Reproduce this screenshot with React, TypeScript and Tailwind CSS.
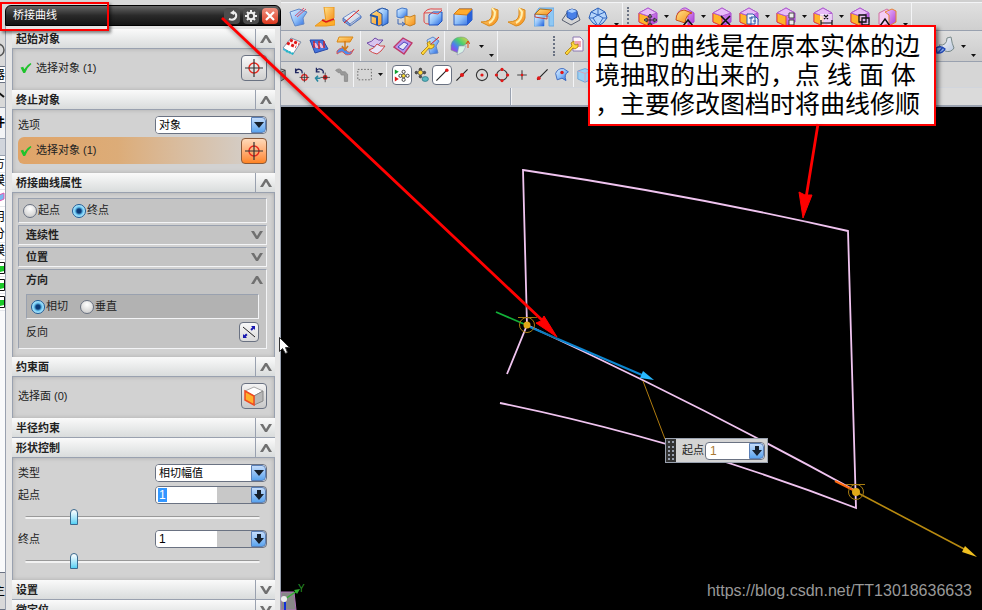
import React, { useState } from "react";

const P = "url(#gPurple)";
const B = "url(#gBlue)";
const O = "url(#gOrange)";
const W = "url(#gWhite)";
const R = "#e01818";

function Defs() {
  return (
    <svg className="absolute h-0 w-0" aria-hidden="true">
      <defs>
        <linearGradient id="gBlue" x1="0" y1="0" x2="1" y2="1">
          <stop offset="0" stopColor="#e4f1ff" />
          <stop offset=".5" stopColor="#8fc0f8" />
          <stop offset="1" stopColor="#1f5fdc" />
        </linearGradient>
        <linearGradient id="gOrange" x1="0" y1="0" x2="1" y2="1">
          <stop offset="0" stopColor="#ffe38a" />
          <stop offset="1" stopColor="#f58a14" />
        </linearGradient>
        <linearGradient id="gPurple" x1="0" y1="0" x2="1" y2="1">
          <stop offset="0" stopColor="#f3c8ff" />
          <stop offset="1" stopColor="#a83ad6" />
        </linearGradient>
        <linearGradient id="gWhite" x1="0" y1="0" x2="1" y2="1">
          <stop offset="0" stopColor="#ffffff" />
          <stop offset="1" stopColor="#b9c6dc" />
        </linearGradient>
        <linearGradient id="gRainbow" x1="0" y1="1" x2="1" y2="0">
          <stop offset="0" stopColor="#d020d8" />
          <stop offset=".35" stopColor="#4d7df0" />
          <stop offset=".6" stopColor="#48d070" />
          <stop offset="1" stopColor="#ffd040" />
        </linearGradient>
      </defs>
    </svg>
  );
}

const purpleCube = (
  <>
    <path d="M1 6 10 1l9 5v9l-9 4-9-4z" fill={P} stroke="#a848d0" />
    <path d="M1 6l9 3v10l-9-4z" fill="#ffb42c" stroke="#e8482c" />
    <path d="M1 6 10 1l9 5-9 3z" fill="#e8bcf8" stroke="#b060d0" />
  </>
);
const wrench = (
  <path d="M1 17l7-7-1-3 3-2v3l2 1 2-1v3l-3 2-2-1-6 7z" fill="#ffd83a" stroke="#a87808" strokeWidth=".8" />
);

const icons: Record<string, React.ReactNode> = {
  trimSheet: <><path d="M2 5l9-3 8 3-4 6 1 6-9 2-3-7z" fill={B} stroke="#6088c8" /><path d="M7 9 16 1M9 10l9-8" stroke="#d85070" /></>,
  sheetCorner: <><path d="M9 0h10v11l-8 4z" fill={O} stroke="#e89820" /><path d="M0 19l9-7 2 4 9-3v5l-9 1z" fill="#ffad2a" stroke="#e89820" /><path d="M7 13l4 2 8-3" stroke={R} strokeWidth="1.5" fill="none" /></>,
  split: <><path d="M1 11l11-7 7 5-11 8z" fill={W} stroke="#6f8cc8" /><path d="M1 11v3l7 5v-2zM8 19l11-8V9" fill="#7ea5e8" stroke="#5575b8" /><path d="M2 16 17 3" stroke={R} /></>,
  blocks: <><path d="M2 7l8-5h7v13l-7 4-8-3z" fill={O} stroke="#2c58b0" /><path d="M8 4l5-3 6 2v13l-6 3V7z" fill={B} stroke="#2456a8" /><path d="M1 8l7 2v8" fill="none" stroke="#2456a8" strokeWidth="2" /></>,
  copyFace: <><path d="M1 3l5-2 5 1v7l-6 2-4-1z" fill={B} stroke="#4478c8" /><path d="M9 9l5 1 5-2v9l-5 2-5-2z" fill={O} stroke="#c88020" /><path d="M2 12v5h6M6 15l3 2-3 2" fill="none" stroke="#3c66b4" /></>,
  wrap: <><path d="M6 8l4-3h9v9l-4 4H6z" fill={B} stroke="#1c50c0" /><path d="M1 6q3-5 10-4h8M1 6v8q0 3 5 3" fill="none" stroke="#e04848" /><path d="M1 6q6-1 14 1l4-4" fill="none" stroke="#e04848" /></>,
  blueBox: <><path d="M1 7l5-5h13v11l-5 5H1z" fill={B} stroke="#2c5cc0" /><path d="M1 7l5-5h13l-5 6z" fill="#ffac2c" stroke="#d87c10" /><path d="M14 8v10l5-5V3z" fill="#2861d8" /></>,
  curlA: <><path d="M12 1l6 2v8q-2 7-9 8l-8-4q10 0 11-7z" fill={O} stroke="#d98a1c" /><path d="M12 1l3 4q0 8-6 11" fill="none" stroke="#fff0b0" strokeWidth="2" /></>,
  panel: <><path d="M0 8 5 1h15v18h-5V9l-5 1v9H0z" fill="#8fc8f4" stroke="#6aa8e0" /><path d="M1 8h9v11H1z" fill={B} /><path d="M1 7l5-5 12 1-5 5z" fill={O} stroke="#b07018" /><path d="M1 7v3l12 2V8l5-5" fill="none" stroke="#c04040" /></>,
  pyramid: <><path d="M1 13l7-10h7l4 10-9 5z" fill="none" stroke="#585f70" /><path d="M6 4l5-2 5 2v6l-5 3-5-3z" fill="#4880e8" stroke="#2450a8" /><path d="M6 4l5-2 5 2-5 2z" fill="#a8ceff" /></>,
  gem: <><path d="M10 1l7 4 2 6-4 5-5 3-5-3-4-5 2-6z" fill="#b4d4fa" stroke="#2a60b8" /><path d="M3 5l7 3 7-3M1 11h4l5-3 5 3h4M10 1v7M5 11l5 8 5-8" fill="none" stroke="#3468c0" /></>,
  pMove: <>{purpleCube}<path d="M12 8v11M7 13h11M12 7l-2 3h4zM12 20l-2-3h4zM6 13l3-2v4zM19 13l-3-2v4z" stroke="#222" fill="#fff" strokeWidth=".9" /></>,
  pOffset: <><path d="M2 7q5-7 9-6l8 5v9l-6 3V9z" fill={P} stroke="#a848d0" /><path d="M1 13q0-9 8-10l8 3q-6 1-7 10z" fill={O} stroke="#c8501c" /><path d="M8 19l5-6 5 6" fill="none" stroke="#111" strokeWidth="1.5" /></>,
  pDelete: <>{purpleCube}<path d="M9 9l9 9M18 9l-9 9" stroke="#111" strokeWidth="1.6" /></>,
  pCopy: <>{purpleCube}<path d="M8 7h6l2 2v8H8zM12 10h5l2 2v7h-7z" fill="#eef4ff" stroke="#315aa8" /><path d="M10 11h4M14 14h3" stroke="#315aa8" /></>,
  pPattern: <>{purpleCube}<path d="M13 6h5v5h-5zM13 13h5v5h-5z" fill="#eee" stroke="#444" /></>,
  pDim: <>{purpleCube}<rect x="7" y="7" width="12" height="12" fill="#ffffffb0" /><path d="M8 13v6M19 13v6M8 16h11M11 8l4 4M15 8l-4 4" stroke="#111" strokeWidth="1.2" /></>,
  pBox: <>{purpleCube}<path d="M9 8h7v7H9zM12 11h7v7h-7z" fill="#fff8" stroke="#111" strokeWidth="1.3" /></>,
  pPair: <><path d="M2 6l8-4 3 2v12l-8 3-3-2z" fill="#f5cdf5" stroke="#d070a0" /><path d="M8 5l7-3 4 2v11l-7 4V8z" fill={P} stroke="#e88430" /><path d="M3 19l5-7 5 7" fill="none" stroke="#111" strokeWidth="1.4" /></>,
  grid: <><path d="M1 12l8-10 10 4-8 12z" fill="#fff" stroke="#8090a8" /><path d="M1 12l10 6v1L1 14z" fill="#42b8d8" /><path d="M5 7l9 4M8 4l9 4" stroke={R} strokeWidth="3" strokeDasharray="3 1.6" /><path d="M4 15l8 3" stroke="#20b8c8" strokeWidth="2" strokeDasharray="2 1" /></>,
  arrowsSheet: <><path d="M1 4l13 0 5 9-13 4z" fill="#4474dc" stroke="#2848a8" /><path d="M4 7h3l3 5H7zM9 7h3l3 5h-3z" fill="#f0b8d8" /><path d="M5 12V5M10 13V5M15 12V5" stroke={R} strokeWidth="1.3" /></>,
  planes: <><path d="M3 1h14l-3 5H1z" fill={O} stroke="#d88818" /><path d="M1 15q6-6 9-1t8-1l-3 5q-5 2-7-1t-7 1z" fill="#4a8cf0" stroke="#d85858" /><path d="M9 5v8M6 10l3 4 3-4" stroke="#d07818" fill="none" strokeWidth="1.5" /></>,
  ribbons: <><path d="M1 7q5-1 8-5 3 3 8 2-4 5-8 7-5-1-8-4z" fill="#d8c4f0" stroke="#7048a8" /><path d="M3 14q5-1 8-6 3 3 8 2-4 6-8 8-5-1-8-4z" fill="#e8e4f8" stroke="#d04848" /></>,
  frame: <><path d="M1 11 10 2l9 5-8 11z" fill="#b894e8" stroke="#c03868" strokeWidth="1.4" /><path d="M5 11l6-5 4 2-5 6z" fill="#e6e6f6" stroke="#4a48c0" /></>,
  fixSheet: <><path d="M7 4l6-3 6 4-3 5 2 7-8 1z" fill={B} stroke="#6088c8" /><path d="M10 9l9-8" stroke={R} />{wrench}</>,
  color: <><path d="M1 9q2-8 10-8 6 0 8 5l-6 4q-4-2-5 7l-7-3z" fill="url(#gRainbow)" stroke="#70a080" strokeWidth=".6" /><path d="M9 10h7l-3 6-6 3z" fill="#d6f3e6" stroke="#88a" strokeWidth=".5" /><path d="M18 12V6M16 8l2-3 2 3" stroke="#d84c10" fill="none" /></>,
  fixNote: <><path d="M9 1h7l3 3v11H9z" fill="#fff5fa" stroke="#8a78b0" /><path d="M11 6h6M11 8h6M11 10h6" stroke="#e05070" />{wrench}</>,
  roll: <><path d="M4 9q8 1 8-7l4-1q1 7 3 11-3 5-9 3z" fill={W} stroke="#788" /><path d="M1 12q5-3 9 1-3 5-8 4zM3 17l5-6" stroke="#2048b8" strokeWidth="1.4" fill="#88a8e8" /></>,
  cube: <path d="M1 5l6-3 7 2v10l-6 4-7-3zM8 7v11M1 5l7 2 6-3" fill="#999" stroke="#333" />,
  undoTarget: <><path d="M2 6q1-4 5-3t3 5M2 2v5h4" fill="none" stroke="#202860" strokeWidth="1.6" /><circle cx="13" cy="13" r="3.5" fill="none" stroke={R} strokeWidth="1.5" /><path d="M13 7v12M7 13h12" stroke="#333" /></>,
  redoTarget: <><path d="M3 5q2-4 6-2t2 5M3 1v5h4" fill="none" stroke="#202860" strokeWidth="1.6" /><path d="M2 14h6M5 11l-3 3 3 4" fill="none" stroke="#2888a0" strokeWidth="2" /><circle cx="14" cy="13" r="3" fill={R} /><path d="M14 7v12M8 13h12" stroke="#333" /></>,
  pipe: <path d="M2 4q6-4 8 2h4l3 3v9h-4v-8H9q0-4-4-3z" fill="#999" stroke="#888" />,
  marquee: <rect x="1" y="3" width="17" height="13" fill="none" stroke="#555" strokeDasharray="2 2" />,
  snapFlower: <><path d="M1 3l5 3-5 3z" fill="#10a030" /><path d="M1 12l5 3-5 3z" fill={R} /><g fill="#fff" stroke="#222"><circle cx="12" cy="6" r="2" /><circle cx="12" cy="16" r="2" /><circle cx="8" cy="11" r="2" /><circle cx="17" cy="11" r="2" /></g><circle cx="12" cy="11" r="2.4" fill="#ffe030" stroke="#444" /></>,
  snapGear: <><g fill="#555" stroke="#333"><circle cx="8" cy="3" r="1.6" /><circle cx="3" cy="7" r="1.6" /><circle cx="13" cy="7" r="1.6" /><circle cx="8" cy="12" r="1.6" /></g><circle cx="8" cy="7" r="3" fill="#ffd838" stroke="#555" /><ellipse cx="14" cy="15" rx="4" ry="3" fill="#58b8c0" stroke="#2c7888" /></>,
  endpoint: <><path d="M3 17 16 4" stroke="#222" strokeWidth="1.4" /><circle cx="16" cy="4" r="2.2" fill={R} /></>,
  midpoint: <><path d="M3 17 17 3" stroke="#222" strokeWidth="1.4" /><circle cx="10" cy="10" r="2.6" fill={R} /></>,
  center: <><circle cx="10" cy="10" r="7" fill="none" stroke="#333" strokeWidth="1.4" /><circle cx="10" cy="10" r="2" fill={R} /></>,
  quadrant: <><circle cx="10" cy="10" r="6.5" fill="none" stroke="#333" strokeWidth="1.4" /><g fill={R}><circle cx="10" cy="3" r="2" /><circle cx="10" cy="17" r="2" /><circle cx="3" cy="10" r="2" /><circle cx="17" cy="10" r="2" /></g></>,
  cross: <><path d="M10 4v12M4 10h12" stroke="#444" strokeWidth="1.4" /><circle cx="10" cy="10" r="1.6" fill={R} /></>,
  pointOn: <><path d="M4 16 17 3" stroke="#222" strokeWidth="1.4" /><circle cx="6" cy="14" r="2.3" fill={R} /></>,
  surfPoint: <><path d="M2 8q3-7 10-6l6 4q-6 3-3 11l-5-3-6 2z" fill={B} stroke="#2858b8" /><circle cx="10" cy="7" r="2.2" fill={R} /></>,
  lightCube: <><path d="M1 5l9-3 9 3v10l-9 4-9-4z" fill="#9cd0f4" stroke="#5a9cd8" /><path d="M10 8v11M1 5l9 3 9-3" stroke="#e09ab0" fill="none" /></>,
};

function Tool({ name, wide, on }: { name: string; wide?: boolean; on?: boolean }) {
  return (
    <button
      type="button"
      aria-label={name}
      className={
        "flex h-5 shrink-0 items-center justify-center " +
        (wide ? "w-[27px] " : "w-5 ") +
        (on ? "rounded-sm border border-gray-500 bg-white" : "")
      }
    >
      <svg viewBox="0 0 20 20" className={wide ? "h-5 w-5" : "h-4 w-4"} fill="none">{icons[name]}</svg>
    </button>
  );
}

function Caret({ low }: { low?: boolean }) {
  return (
    <button type="button" aria-label="more" className={"flex w-[10px] shrink-0 justify-center " + (low ? "self-end pb-1" : "")}>
      <svg viewBox="0 0 5 3" className="h-[3px] w-[5px]"><path d="M0 0h5L2.5 3z" fill="#111" /></svg>
    </button>
  );
}

const Sep = () => <span className="mx-px h-full w-px shrink-0 bg-gray-100" />;
const Grip = () => <span className="mr-1 h-5 w-[3px] shrink-0 border-l-2 border-dotted border-gray-500" />;

function Toolbars() {
  return (
    <header className="shrink-0 overflow-hidden bg-[#d9d9d9]">
      <div className="h-[3px] border-b border-gray-100 bg-[#cfcfcf]" />
      <div className="flex h-7 items-center border-b border-gray-400 bg-gradient-to-b from-[#e0e0e0] to-[#cfcfcf] pl-[3px]">
        {["trimSheet", "sheetCorner", "split", "blocks", "copyFace", "wrap"].map((n) => <Tool key={n} name={n} wide />)}
        <Sep />
        {["blueBox", "curlA", "curlA", "panel", "pyramid", "gem"].map((n, i) => <Tool key={i} name={n} wide />)}
        <Caret low />
        <Sep />
        <span className="w-[3px] shrink-0" />
        <Grip />
        <Tool name="pMove" wide /><Caret />
        <Tool name="pOffset" wide /><Caret />
        <Tool name="pDelete" wide />
        <Tool name="pCopy" wide /><Caret />
        <Tool name="pPattern" wide /><Caret />
        <Tool name="pDim" wide /><Caret />
        <Tool name="pBox" wide />
        <Tool name="pPair" wide />
        <Caret low />
        <Sep />
      </div>
      <div className="flex h-[31px] items-center border-b border-gray-400 bg-gradient-to-b from-[#dedede] to-[#cbcbcb]">
        <div className="flex h-full grow items-center">
          <div className="flex w-[78px] justify-end">
            {["grid", "arrowsSheet", "planes"].map((n) => <Tool key={n} name={n} wide />)}
          </div>
          <Sep />
          {["ribbons", "frame", "fixSheet"].map((n) => <Tool key={n} name={n} wide />)}
          <Sep />
          <Tool name="color" wide />
          <span className="w-[3px]" />
          <Caret /><Caret low />
          <Sep />
          <span className="w-[54px] shrink-0" />
          <Grip />
          <Tool name="fixNote" wide />
        </div>
        <Tool name="roll" wide />
        <Caret /><Caret low />
        <span className="w-1" />
      </div>
      <div className="flex h-[26px] items-center border-b border-gray-300 bg-[#d6d6d6]">
        <div className="flex w-[71px] justify-end">
          {["cube", "undoTarget", "redoTarget", "pipe"].map((n) => <Tool key={n} name={n} />)}
        </div>
        <Sep />
        <Tool name="marquee" />
        <Caret />
        <Sep />
        <span className="w-1 shrink-0" />
        <Tool name="snapFlower" on />
        <Tool name="snapGear" />
        <Tool name="endpoint" on />
        {["midpoint", "center", "quadrant", "cross", "pointOn", "surfPoint"].map((n) => <Tool key={n} name={n} />)}
        <Sep />
        <Tool name="lightCube" />
      </div>
      <div className="flex h-[19px] border-b-2 border-gray-400 bg-[#dadada]">
        <span className="w-[230px] border-r border-gray-400" />
        <span className="grow border-l border-gray-100" />
      </div>
    </header>
  );
}

const Chevron = ({ up }: { up?: boolean }) => (
  <svg viewBox="0 0 12 8" className="h-2 w-3">
    <path d={up ? "M0 8 5 0h2l5 8H9L6 3 3 8z" : "M0 0l5 8h2l5-8H9L6 5 3 0z"} fill="#707070" />
  </svg>
);

function Section({ title, open, children }: { title: string; open?: boolean; children?: React.ReactNode }) {
  return (
    <section className="shrink-0">
      <h2 className="flex h-5 border-b border-gray-400 bg-gradient-to-b from-[#fafafa] to-[#d9dcdc] text-[11px] font-bold text-[#222]">
        <span className="grow pl-1 leading-5">{title}</span>
        <button type="button" aria-label={title} aria-expanded={!!open} className="flex w-5 items-center justify-center border-l border-gray-400">
          <Chevron up={open} />
        </button>
      </h2>
      {children && <div className="border-x border-gray-400 bg-[#d2d2d2] pl-[5px] pr-[7px] shadow-[inset_0_0_4px_#aaaaaa]">{children}</div>}
    </section>
  );
}

const Check = () => (
  <svg viewBox="0 0 12 11" className="h-[10px] w-3 shrink-0"><path d="M0 5l3-1 1 3q3-5 7-7l1 1Q7 5 5 11H3z" fill="#1fc32c" /></svg>
);

function Target({ hot }: { hot?: boolean }) {
  return (
    <button
      type="button"
      aria-label="选择对象"
      className={
        "flex h-[26px] w-[26px] shrink-0 items-center justify-center rounded-sm border bg-gradient-to-b " +
        (hot ? "border-[#8a5a3a] from-[#ffd9b8] to-[#ff8420]" : "border-gray-500 from-[#fafafa] to-[#cfcfcf]")
      }
    >
      <svg viewBox="0 0 20 20" className="h-5 w-5" fill="none">
        <circle cx="10" cy="10" r="5" stroke="#e8281c" strokeWidth="1.4" />
        <path d="M10 1v18M1 10h18" stroke="#333" strokeWidth="1.2" />
      </svg>
    </button>
  );
}

function BlueBtn({ arrow }: { arrow?: boolean }) {
  return (
    <span className="pointer-events-none flex w-[15px] shrink-0 items-center justify-center rounded-r-sm border border-[#5a80b8] bg-gradient-to-b from-[#c4dcfa] to-[#5aa4ee]">
      <svg viewBox="0 0 10 10" className="h-[10px] w-[10px]">
        <path d={arrow ? "M3 0h4v4h3L5 10 0 4h3z" : "M0 2h10L5 8z"} fill="#16202c" />
      </svg>
    </span>
  );
}

const field = "flex h-[18px] w-[112px] overflow-hidden rounded-sm border border-gray-500";

function SelectRow({ id, label, value }: { id: string; label: string; value: string }) {
  return (
    <div className="flex items-center justify-between">
      <label htmlFor={id}>{label}</label>
      <div className={field + " bg-white"}>
        <select id={id} defaultValue={value} className="min-w-0 grow appearance-none bg-white pl-[3px] text-[11px] leading-4 text-black outline-none">
          <option>{value}</option>
        </select>
        <BlueBtn />
      </div>
    </div>
  );
}

function ValueRow({ id, label, selected }: { id: string; label: string; selected?: boolean }) {
  const [pos, setPos] = useState(20);
  return (
    <div>
      <div className="flex items-center justify-between">
        <label htmlFor={id}>{label}</label>
        <div className={field + " bg-[#c8c8c8]"}>
          <div className="flex w-[61px] items-center bg-white pl-[2px]">
            <input
              id={id}
              defaultValue="1"
              className={"h-[14px] text-[12px] leading-[14px] outline-none " + (selected ? "w-[9px] bg-[#3397ff] pl-px text-white" : "w-10 pl-px text-black")}
            />
          </div>
          <span className="grow" />
          <BlueBtn arrow />
        </div>
      </div>
      <div className="flex h-[26px] items-center pl-[7px] pr-[7px]">
        <input
          type="range"
          aria-label={label}
          value={pos}
          onChange={(e) => setPos(Number(e.target.value))}
          className="h-4 w-full appearance-none bg-transparent [&::-webkit-slider-runnable-track]:h-[3px] [&::-webkit-slider-runnable-track]:rounded-full [&::-webkit-slider-runnable-track]:border-t [&::-webkit-slider-runnable-track]:border-[#999999] [&::-webkit-slider-runnable-track]:bg-[#f2f2f2] [&::-webkit-slider-thumb]:-mt-2 [&::-webkit-slider-thumb]:h-4 [&::-webkit-slider-thumb]:w-2 [&::-webkit-slider-thumb]:appearance-none [&::-webkit-slider-thumb]:rounded-t-full [&::-webkit-slider-thumb]:rounded-b-xs [&::-webkit-slider-thumb]:border [&::-webkit-slider-thumb]:border-[#3a6a90] [&::-webkit-slider-thumb]:bg-gradient-to-b [&::-webkit-slider-thumb]:from-white [&::-webkit-slider-thumb]:to-[#50d0f4]"
        />
      </div>
    </div>
  );
}

function Radio({ name, label, on }: { name: string; label: string; on?: boolean }) {
  return (
    <label className="flex items-center">
      <input
        type="radio"
        name={name}
        defaultChecked={on}
        className="mr-px h-[14px] w-[14px] appearance-none rounded-full border border-gray-500 bg-[radial-gradient(circle_at_50%_30%,#ffffff,#c4c4c4)] checked:border-[#1d5c98] checked:bg-[radial-gradient(circle,#0a3a78_0_2px,#6cc8f4_4px,#b8ecff_6px)]"
      />
      {label}
    </label>
  );
}

const group = "border border-r-gray-100 border-b-gray-100 border-l-gray-400 border-t-gray-400";

function Fold({ title }: { title: string }) {
  return (
    <div className={group + " flex h-5 items-center justify-between bg-[#c4c4c4] pl-[7px] pr-[3px] font-bold"}>
      {title}
      <button type="button" aria-label={title}><Chevron /></button>
    </div>
  );
}

function Dialog() {
  return (
    <aside className="flex w-[276px] shrink-0 flex-col overflow-hidden bg-[#d9d9d9] pt-[5px] text-[11px] text-[#222]">
      <div className="flex h-[21px] shrink-0 items-center gap-[3px] rounded-t-md border border-black bg-gradient-to-b from-[#666] via-[#2a2a2a] via-50% to-[#141414] pl-[7px] pr-[2px]">
        <h1 className="grow text-[11px] text-white">桥接曲线</h1>
        <button type="button" aria-label="重置" className="flex h-4 w-4 items-center justify-center rounded-sm bg-[#4c4c4c]">
          <svg viewBox="0 0 12 12" className="h-3 w-3" fill="none"><path d="M7 2q4 1 3 5-2 4-7 2" stroke="#eee" strokeWidth="2" /><path d="M8 0v5L4 3z" fill="#eee" /></svg>
        </button>
        <button type="button" aria-label="选项" className="flex h-4 w-4 items-center justify-center rounded-sm bg-[#4c4c4c]">
          <svg viewBox="0 0 14 14" className="h-[14px] w-[14px]" fill="none"><path d="M7 1v12M1 7h12M3 3l8 8M11 3l-8 8" stroke="#eee" strokeWidth="2" /><circle cx="7" cy="7" r="3.2" fill="#444" stroke="#eee" strokeWidth="2" /></svg>
        </button>
        <button type="button" aria-label="关闭" className="flex h-4 w-4 items-center justify-center rounded-sm bg-gradient-to-b from-[#f09080] to-[#dc3418]">
          <svg viewBox="0 0 10 10" className="h-[10px] w-[10px]"><path d="M1 1l8 8M9 1 1 9" stroke="#fff" strokeWidth="2.2" /></svg>
        </button>
      </div>
      <div className="flex min-h-0 grow flex-col border-x border-gray-400 bg-[#e6e6e6] pl-[6px] pr-[5px] pt-[3px]">
        <Section title="起始对象" open>
          <div className="flex items-center pb-[9px] pl-[2px] pt-[6px]">
            <Check /><span className="grow pl-1">选择对象 (1)</span><Target />
          </div>
        </Section>
        <Section title="终止对象" open>
          <div className="flex flex-col gap-[3px] pb-[9px] pt-[6px]">
            <SelectRow id="end-option" label="选项" value="对象" />
            <div className="flex h-[27px] items-center rounded-md bg-gradient-to-r from-[#e0a468] via-[#dcac78] via-40% to-[#d2d2d2] pl-[2px]">
              <Check /><span className="grow pl-1">选择对象 (1)</span><Target hot />
            </div>
          </div>
        </Section>
        <Section title="桥接曲线属性" open>
          <div className="flex flex-col gap-[2px] pb-2 pt-[5px]">
            <div className={group + " flex h-[25px] items-center gap-3 bg-[#c4c4c4] pl-1"}>
              <Radio name="end" label="起点" />
              <Radio name="end" label="终点" on />
            </div>
            <Fold title="连续性" />
            <Fold title="位置" />
            <div className={group + " h-20 bg-[#c4c4c4] px-[7px]"}>
              <div className="-mr-1 flex h-6 items-center justify-between pb-1 font-bold">
                方向
                <button type="button" aria-label="方向"><Chevron up /></button>
              </div>
              <div className={group + " flex h-[25px] items-center gap-3 bg-[#b2b2b2] pl-1"}>
                <Radio name="dir" label="相切" on />
                <Radio name="dir" label="垂直" />
              </div>
              <div className="flex items-center justify-between pt-[3px]">
                <span>反向</span>
                <button type="button" aria-label="反向" className="flex h-5 w-5 items-center justify-center rounded-sm border border-gray-500 bg-gradient-to-b from-[#f8f8f8] to-[#dadada]">
                  <svg viewBox="0 0 14 14" className="h-[14px] w-[14px]" fill="none"><path d="M1 2l12 10" stroke="#222" /><path d="M2 12 12 2" stroke="#1818b0" strokeDasharray="4 6" strokeWidth="2" /><path d="M13 1v4L9 1zM1 13V9l4 4z" fill="#1818b0" /></svg>
                </button>
              </div>
            </div>
          </div>
        </Section>
        <Section title="约束面" open>
          <div className="flex items-center justify-between pb-[9px] pt-[6px]">
            选择面 (0)
            <button type="button" aria-label="选择面" className="flex h-[26px] w-[26px] items-center justify-center rounded-sm border border-gray-500 bg-gradient-to-b from-[#f4f4f4] to-[#c8c8c8]">
              <svg viewBox="0 0 20 20" className="h-5 w-5"><path d="M1 5l9-4 9 4-9 5z" fill="#fff" stroke="#aaa" /><path d="M10 10l9-5v10l-9 4z" fill="#b8b8b8" stroke="#888" /><path d="M1 5l9 5v9l-9-5z" fill="#ffb02c" stroke="#f04a20" strokeWidth="1.5" /></svg>
            </button>
          </div>
        </Section>
        <Section title="半径约束" />
        <Section title="形状控制" open>
          <div className="pb-[6px] pt-[6px]">
            <div className="pb-1"><SelectRow id="shape-type" label="类型" value="相切幅值" /></div>
            <ValueRow id="start-value" label="起点" selected />
            <ValueRow id="end-value" label="终点" />
          </div>
        </Section>
        <Section title="设置" />
        <Section title="微定位" />
      </div>
    </aside>
  );
}

const Row = ({ children }: { children?: React.ReactNode }) => (
  <div className="flex h-[17px] shrink-0 items-center justify-end border-b border-gray-200 bg-white">{children}</div>
);
const Tick = () => (
  <svg viewBox="0 0 12 12" className="h-3 w-3 shrink-0"><path d="M.5.5h11v11H.5z" fill="#fff" stroke="#111" /><path d="M4 4l3 6 4-1V4z" fill="#18c828" /></svg>
);

function Navigator() {
  return (
    <div className="flex w-[5px] shrink-0 flex-col overflow-hidden bg-[#d9d9d9] text-[12px] whitespace-nowrap text-black">
      <div className="h-[33px] shrink-0" />
      <div className="flex h-[33px] shrink-0 items-center justify-end">
        <svg viewBox="0 0 14 14" className="h-[14px] w-[14px] shrink-0"><circle cx="7" cy="7" r="6" fill="none" stroke="#555" strokeWidth="1.5" /></svg>
      </div>
      <div className="flex h-[17px] shrink-0 items-center justify-end border-y border-gray-500 bg-white">器</div>
      <div className="flex h-[25px] shrink-0 items-center justify-end border-b border-gray-400">
        <svg viewBox="0 0 6 6" className="h-[6px] w-[6px] shrink-0"><path d="M0 1l5 4" stroke="#111" strokeWidth="2" /></svg>
      </div>
      <div className="flex h-[30px] shrink-0 items-center justify-end bg-gray-100 font-bold">件</div>
      <div className="h-[18px] shrink-0 border-y border-gray-400 bg-gray-300" />
      <Row>方</Row>
      <Row>模</Row>
      <Row><svg viewBox="0 0 12 12" className="h-3 w-3 shrink-0"><path d="M1 5l10-4v6l-9 4z" fill="#78b8f0" stroke="#e058b0" /></svg></Row>
      <div className="flex h-[19px] shrink-0 items-center justify-end bg-white">用</div>
      <Row>分</Row>
      <Row>模</Row>
      <Row><Tick /></Row>
      <Row><Tick /></Row>
      <Row><Tick /></Row>
      <div className="grow bg-gray-50" />
      <div className="flex h-[38px] shrink-0 items-center justify-end border-y border-gray-500">主</div>
    </div>
  );
}

function Viewport() {
  return (
    <div className="relative grow overflow-hidden bg-black">
      <svg viewBox="281 107 701 503" className="absolute left-0 top-0 h-[503px] w-[701px]" fill="none">
        <g stroke="#f0c4f0" strokeWidth="1.8">
          <path d="M507 374 527 325 523 170Q690 195 848 231L856 508Q680 440 500 403" />
          <path d="M527 325Q690 400 856 491" />
        </g>
        <path d="M496 312l28 12" stroke="#12b038" strokeWidth="1.8" />
        <path d="M530 327l112 48" stroke="#0c86d0" strokeWidth="2" />
        <path d="M643 371l11 9-14-2z" fill="#28b8ff" />
        <path d="M643 381l22 58" stroke="#b07c10" />
        <path d="M835 481l18 9" stroke="#ff6a10" strokeWidth="2" />
        <path d="M858 493l108 57" stroke="#b88a10" strokeWidth="1.6" />
        <path d="M965 546l12 11-15-5z" fill="#f0c020" />
        <g stroke="#a87c10">
          <circle cx="527" cy="325" r="7.5" /><path d="M518 317.5h19" />
          <circle cx="856" cy="492" r="7.5" /><path d="M846 484.5h19" />
        </g>
        <g fill="#e0a818"><circle cx="527" cy="325" r="3.5" /><circle cx="856" cy="492" r="4" /></g>
        <path d="M281 592h13l2 18h-15z" fill="#888" stroke="#b070b8" />
        <path d="M285 599l12-8" stroke="#30b030" strokeWidth="1.5" />
        <path d="M300 589l-6 1 3 4z" fill="#30b030" />
        <path d="M285 602v8" stroke="#1030d8" strokeWidth="2" />
        <circle cx="284" cy="599" r="3" fill="#eee" />
        <text x="298" y="592" fontSize="10" fill="#289028">Y</text>
      </svg>
      <div className="absolute left-[384px] top-[331px] flex h-[25px] w-[103px] items-center border border-gray-400 bg-[#d4d4d4] pr-[2px] text-[11px] text-[#222]">
        <span className="flex h-full w-[10px] items-center justify-center bg-[#333]">
          <span className="h-[19px] w-[6px] border-x-2 border-dotted border-gray-400" />
        </span>
        <label htmlFor="float-start" className="grow pl-[6px]">起点</label>
        <div className="flex h-[18px] w-[60px] rounded-sm border border-gray-500 bg-white">
          <input id="float-start" defaultValue="1" className="min-w-0 grow bg-transparent pl-1 text-[12px] leading-4 text-[#a87830] outline-none" />
          <BlueBtn arrow />
        </div>
      </div>
      <p className="absolute right-[10px] bottom-[7px] font-['Liberation_Sans',sans-serif] text-[16px] leading-6 text-[#999]">https://blog.csdn.net/TT13018636633</p>
    </div>
  );
}

function Annotations() {
  return (
    <div className="pointer-events-none absolute inset-0 overflow-hidden">
      <div className="absolute left-0 top-[2px] h-[29px] w-[109px] border-2 border-[#f00] shadow-[2px_2px_3px_#00000080]" />
      <div className="absolute left-[588px] top-[25px] border-2 border-[#f00] bg-white py-[5px] pr-[14px] pl-[5px] text-[25px] leading-[29px] whitespace-nowrap text-black shadow-[3px_3px_4px_#00000080]">
        <p>白色的曲线是在原本实体的边</p>
        <p>境抽取的出来的，点 线 面 体</p>
        <p>，主要修改图档时将曲线修顺</p>
      </div>
      <svg viewBox="0 0 982 610" className="absolute left-0 top-0 h-[610px] w-[982px] drop-shadow-[2px_3px_2px_#00000080]">
        <path d="M222 18 543 321M818 124 806 198" stroke="#f00" strokeWidth="2.8" />
        <path d="M557 337 536 323l5-2 3-5zM803 218l-4-26 6 3 7 0z" fill="#f00" stroke="#f00" />
      </svg>
      <svg viewBox="0 0 12 18" className="absolute left-[279px] top-[337px] h-[18px] w-3">
        <path d="M.5.5v14l3-3 3 5 2-1-2-5h4z" fill="#fff" stroke="#333" />
      </svg>
    </div>
  );
}

export default function App() {
  return (
    <div className="relative flex h-screen w-full overflow-hidden bg-black font-['Liberation_Sans','Noto_Sans_CJK_SC',sans-serif]">
      <Defs />
      <Navigator />
      <Dialog />
      <main className="flex min-w-0 grow flex-col">
        <Toolbars />
        <Viewport />
      </main>
      <Annotations />
    </div>
  );
}
